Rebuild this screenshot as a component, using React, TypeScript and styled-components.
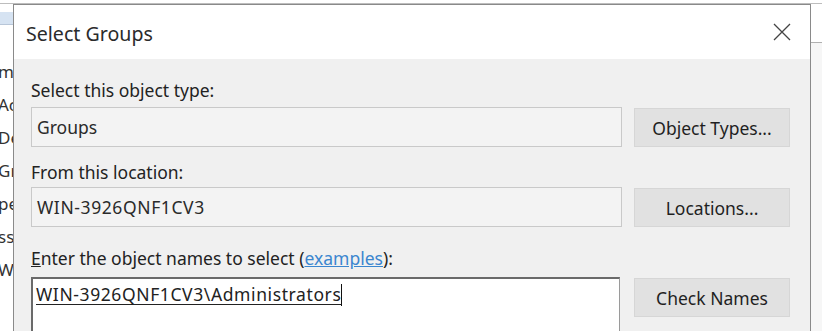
import styled, { createGlobalStyle } from "styled-components";

const GlobalStyle = createGlobalStyle`
  html, body {
    margin: 0;
    padding: 0;
    background: #ffffff;
  }
  body {
    font-family: "Noto Sans", "Open Sans", sans-serif;
  }
`;

const Screen = styled.div`
  width: 822px;
  height: 331px;
  overflow: hidden;
  display: flex;
  flex-direction: column;
  background: #ffffff;
`;

const TopStrip = styled.div`
  height: 4px;
  flex: none;
  border-bottom: 1px solid #bdbdbd;
  box-sizing: border-box;
`;

const Desk = styled.div`
  flex: 1;
  display: flex;
  min-height: 0;
`;

const LeftStrip = styled.div`
  width: 13px;
  flex: none;
  overflow: hidden;
  display: flex;
  flex-direction: column;
  background: #ffffff;
`;

const StripBar = styled.div`
  height: 12px;
  margin-top: 8px;
  background: #d6e3f2;
  border-bottom: 1px solid #b8c6d8;
`;

const StripList = styled.div`
  display: flex;
  flex-direction: column;
  gap: 15px;
  padding-top: 38px;
  font-family: "Noto Sans", sans-serif;
  font-size: 17px;
  line-height: 18px;
  color: #333;
  white-space: nowrap;
  margin-left: -2px;
`;

const RightStrip = styled.div`
  width: 11px;
  flex: none;
  display: flex;
  flex-direction: column;
`;

const RightLine = styled.div`
  height: 38px;
  border-bottom: 1px solid #b0b0b0;
`;

const RightShade = styled.div`
  flex: 1;
  background: #f6f6f6;
`;

const Dialog = styled.div`
  width: 798px;
  flex: none;
  border: 1px solid #8a8a8a;
  border-bottom: none;
  box-sizing: border-box;
  display: flex;
  flex-direction: column;
  background: #f0f0f0;
`;

const TitleBar = styled.div`
  height: 54px;
  flex: none;
  background: #ffffff;
  display: flex;
  align-items: center;
  justify-content: space-between;
  padding: 0 19px 0 12px;
`;

const Title = styled.div`
  font-family: "Noto Sans", sans-serif;
  font-size: 19.6px;
  color: #2b2b2b;
  padding-top: 2px;
`;

const Body = styled.div`
  flex: 1;
  padding: 20px 19px 0 17px;
  display: flex;
  flex-direction: column;
`;

const Label = styled.div<{ $gap: number }>`
  font-size: 17.5px;
  color: #222;
  height: 22px;
  line-height: 22px;
  white-space: nowrap;
  margin-bottom: ${(p) => p.$gap}px;
`;

const Row = styled.div<{ $gap: number; $space?: number }>`
  display: flex;
  align-items: flex-start;
  gap: ${(p) => p.$space ?? 12}px;
  margin-bottom: ${(p) => p.$gap}px;
`;

const Field = styled.div<{ $wide?: boolean }>`
  width: 591px;
  height: 40px;
  box-sizing: border-box;
  border: 1px solid #c9c9c9;
  background: #f3f3f3;
  display: flex;
  align-items: center;
  padding-left: 5px;
  font-size: 17.5px;
  letter-spacing: ${(p) => (p.$wide ? "0.6px" : "0")};
  color: #2a2a2a;
`;

const NamesBox = styled.div`
  width: 589px;
  height: 80px;
  box-sizing: border-box;
  border: 2px solid #6a6a6a;
  border-bottom: none;
  border-right: 1px solid #9a9a9a;
  background: #ffffff;
  padding: 3px 3px;
  font-size: 17.5px;
  letter-spacing: 0.6px;
  color: #222;
  white-space: nowrap;
`;

const Resolved = styled.span`
  text-decoration: underline;
  text-underline-offset: 3px;
`;

const Caret = styled.span`
  display: inline-block;
  width: 1px;
  height: 22px;
  background: #111;
  vertical-align: -5px;
`;

const Button = styled.div`
  width: 156px;
  height: 39px;
  box-sizing: border-box;
  margin-top: 1px;
  background: #e1e1e1;
  border: 1px solid #d6d6d6;
  display: flex;
  align-items: center;
  justify-content: center;
  font-size: 17.5px;
  color: #1f1f1f;
`;

const Link = styled.span`
  color: #3b86cf;
  text-decoration: underline;
`;

const Accel = styled.span`
  text-decoration: underline;
`;

const CloseIcon = () => (
  <svg width="18" height="18" viewBox="0 0 18 18">
    <path d="M1 1 L17 17 M17 1 L1 17" stroke="#444" strokeWidth="1.3" fill="none" />
  </svg>
);

export default function App() {
  return (
    <>
      <GlobalStyle />
      <Screen>
        <TopStrip />
        <Desk>
          <LeftStrip>
            <StripBar />
            <StripList>
              <span>m</span>
              <span>Ac</span>
              <span>De</span>
              <span>Gr</span>
              <span>pe</span>
              <span>ss</span>
              <span>W</span>
            </StripList>
          </LeftStrip>
          <Dialog>
            <TitleBar>
              <Title>Select Groups</Title>
              <CloseIcon />
            </TitleBar>
            <Body>
              <Label $gap={6}>Select this object type:</Label>
              <Row $gap={14}>
                <Field>Groups</Field>
                <Button>Object Types...</Button>
              </Row>
              <Label $gap={4}>From this location:</Label>
              <Row $gap={20}>
                <Field $wide>WIN-3926QNF1CV3</Field>
                <Button>Locations...</Button>
              </Row>
              <Label $gap={8}>
                <Accel>E</Accel>nter the object names to select (<Link>examples</Link>):
              </Label>
              <Row $gap={0} $space={14}>
                <NamesBox>
                  <Resolved>WIN-3926QNF1CV3\Administrators</Resolved>
                  <Caret />
                </NamesBox>
                <Button>Check Names</Button>
              </Row>
            </Body>
          </Dialog>
          <RightStrip>
            <RightLine />
            <RightShade />
          </RightStrip>
        </Desk>
      </Screen>
    </>
  );
}
